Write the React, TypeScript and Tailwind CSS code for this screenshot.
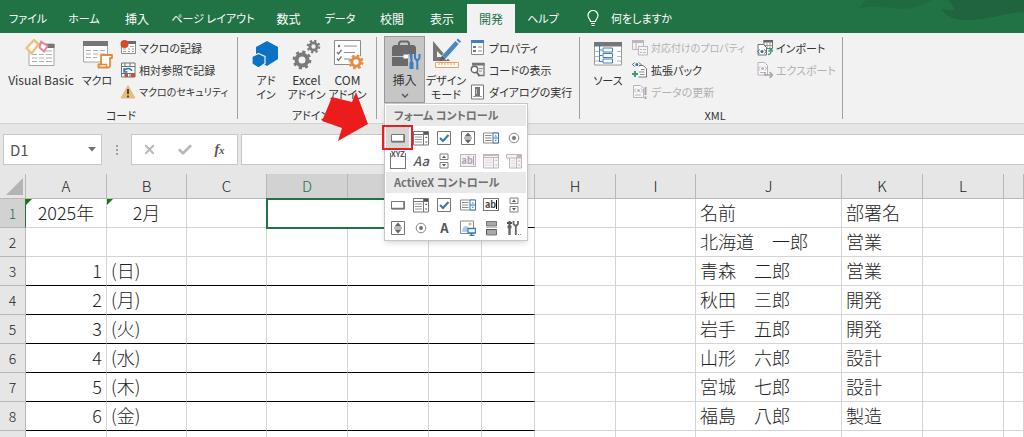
import { useState } from "react";
import type { ReactNode } from "react";
import clsx from "clsx";
import { Check, X } from "lucide-react";

/* ---------- Icon helpers ---------- */

type IconProps = { children: ReactNode };

const BigIcon = ({ children }: IconProps) => (
  <svg viewBox="0 0 32 32" className="size-8 shrink-0" fill="none" aria-hidden="true">
    {children}
  </svg>
);

const SmallIcon = ({ children }: IconProps) => (
  <svg viewBox="0 0 16 16" className="size-4 shrink-0" fill="none" aria-hidden="true">
    {children}
  </svg>
);

/* ---------- Large ribbon icons ---------- */

const VisualBasicIcon = () => (
  <BigIcon>
    <path d="M4 6h25v21.500H4z" fill="#fff" stroke="#a6a6a6" />
    <path d="M18 6h11.500v4H18z" fill="#767676" />
    <path d="M7 16.500h5m2 0h5m2 0h6M7 20h5m2 0h5m2 0h6M7 23.500h5m2 0h5m2 0h6M20 13h7" stroke="#b0b0b0" />
    <path d="M9 2l4.500 4.500L6.500 15.500 1.500 10z" fill="#fff" stroke="#e9c47c" strokeWidth="2.500" strokeLinejoin="round" />
    <path d="M16 3.500l6.500 4.500-3.500 5.500-4.500-4z" fill="#fff" stroke="#e9869c" strokeWidth="2" strokeLinejoin="round" />
  </BigIcon>
);

const MacroIcon = () => (
  <BigIcon>
    <path d="M2.500 3.500h24v20.500h-24z" fill="#fff" stroke="#a6a6a6" />
    <path d="M2 3h25v5H2z" fill="#767676" />
    <path d="M5 12.500h5m2 0h5m2 0h5M5 16h5m2 0h5m2 0h5M5 19.500h5m2 0h4" stroke="#b0b0b0" />
    <path
      d="M20 17h11v3h-2v8c0 1-1 1.500-2 1.500H17.500v-3H20z"
      fill="#fff"
      stroke="#e8893c"
      strokeWidth="1.800"
      strokeLinejoin="round"
    />
    <path d="M17.500 26.500h8v3" stroke="#e8893c" strokeWidth="1.500" />
  </BigIcon>
);

const AddInIcon = () => (
  <BigIcon>
    <path d="M17 3l11 6v12l-11 7-11-7V9z" fill="#0c72c6" />
    <path d="M8.500 15.500l6.500 3v7l-6.500 4.500-6.500-4v-7.500z" fill="#0c72c6" stroke="#f2f2f2" strokeWidth="1.200" />
  </BigIcon>
);

const ExcelAddInIcon = () => (
  <BigIcon>
    <circle cx="11" cy="22" r="5.500" stroke="#7a7a7a" strokeWidth="4" />
    <circle cx="11" cy="22" r="8.200" stroke="#7a7a7a" strokeWidth="2.400" strokeDasharray="3.200 3.240" />
    <circle cx="22.500" cy="8.500" r="3.600" stroke="#7a7a7a" strokeWidth="2.800" />
    <circle cx="22.500" cy="8.500" r="5.800" stroke="#7a7a7a" strokeWidth="2" strokeDasharray="2.300 2.250" />
  </BigIcon>
);

const ComAddInIcon = () => (
  <BigIcon>
    <path d="M2.500 2.500h26v24h-26z" fill="#fff" stroke="#8c8c8c" />
    <path d="M12 8h13M12 14.500h11M12 21h5" stroke="#8c8c8c" />
    <path d="M5 14l1.500 2 3-4M5 20.500l1.500 2 3-4" stroke="#767676" strokeWidth="1.300" />
    <circle cx="7" cy="8" r="1.200" fill="#767676" />
    <circle cx="24" cy="24" r="7.500" fill="#f2f2f2" />
    <circle cx="24" cy="24" r="4.200" stroke="#e28b43" strokeWidth="3" />
    <circle cx="24" cy="24" r="6.400" stroke="#e28b43" strokeWidth="2.200" strokeDasharray="2.600 2.430" />
  </BigIcon>
);

const ToolboxIcon = () => (
  <BigIcon>
    <path d="M10 7V5l1.500-1.500h7L20 5v2" stroke="#6a6a6a" strokeWidth="2" />
    <path d="M3 9l2-2h20l2 2v9H3z" fill="#6a6a6a" />
    <path d="M3 19h20v9H3z" fill="#6a6a6a" />
    <path d="M19 16h13v16H19z" fill="#c6c6c6" />
    <path d="M14.500 16.500h4.500v4h-4.500z" fill="#fff" />
    <path d="M20.500 16h3v7l1 2v6h-4v-6l1-2z" fill="#3c7fc0" />
    <path d="M26 16v4l1.500 2h1.500l1.500-2v-4M28.300 22v9.500" stroke="#3c7fc0" strokeWidth="2" />
  </BigIcon>
);

const DesignIcon = () => (
  <BigIcon>
    <path d="M3 3v20h17z" fill="#767676" />
    <path d="M7 13v6h6z" fill="#f2f2f2" />
    <path d="M29 3.500L14 20" stroke="#f2f2f2" strokeWidth="6.500" />
    <path d="M27 4.500L14 19" stroke="#4a86c5" strokeWidth="4.500" />
    <path d="M28 3.500l1.500-1.500" stroke="#4a86c5" strokeWidth="4.500" />
    <path d="M12 17.500l3.500 3-6 3z" fill="#5b5b5b" />
    <path d="M5.500 24.500h23v5h-23z" fill="#fff" stroke="#e8a25c" />
    <path d="M9 25v2m3-2v2m3-2v2m3-2v2m3-2v2m3-2v2" stroke="#e8a25c" />
  </BigIcon>
);

const SourceIcon = () => (
  <BigIcon>
    <path d="M2.500 4.500h27v22.500h-27z" fill="#fff" stroke="#9a9a9a" />
    <path d="M2 4h28v4.500H2z" fill="#767676" />
    <path d="M3 13.500h5m17 0h4M3 18.500h5m17 0h4M3 23h5m17 0h4" stroke="#b8b8b8" />
    <path d="M7.500 4v20M7.500 12h3m-3 5.500h3m-3 6h3" stroke="#3f7fbf" />
    <path d="M11 10h9.500v4H11zM11 15.500h9.500v4H11zM11 21h9.500v4H11z" fill="#fff" stroke="#3f7fbf" />
  </BigIcon>
);

/* ---------- Small ribbon icons ---------- */

const RecordIcon = () => (
  <SmallIcon>
    <path d="M1.500 1.500h14v12h-14z" fill="#fff" stroke="#8c8c8c" />
    <path d="M8 1h8v3H8z" fill="#6a6a6a" />
    <path d="M3 9h3m2 0h2m2 0h2M3 11.500h3m2 0h2m2 0h2M10 6.500h4" stroke="#a0a0a0" />
    <circle cx="4.500" cy="4" r="4" fill="#d8492a" />
  </SmallIcon>
);

const RelativeIcon = () => (
  <SmallIcon>
    <path d="M1.500 1h13.500v14H1.500zM1 4.500h14M1 11.500h14M5 1v3.500M10 1v3.500M5 11.500V15M10 11.500V15" fill="#fff" stroke="#707070" />
    <path d="M5 12h3v3H5zM11 12h4v3h-4z" fill="#d8492a" />
    <path d="M4 9.500c1-4 7-4 8-.5M4 6v4h3.500" stroke="#2f75b5" strokeWidth="1.400" />
  </SmallIcon>
);

const WarningIcon = () => (
  <SmallIcon>
    <path d="M8 1.500L15 14H1z" fill="#e8bd78" stroke="#e8bd78" strokeLinejoin="round" />
    <path d="M8 5v5m0 1.500v2" stroke="#3a3a3a" strokeWidth="1.800" />
  </SmallIcon>
);

const PropertiesIcon = () => (
  <SmallIcon>
    <path d="M1.500 1.500h12v13h-12z" fill="#fff" stroke="#8c8c8c" />
    <path d="M1 0h13v3H1z" fill="#3f7fbf" />
    <path d="M3 6h3v2H3zM3 10h3v2H3z" fill="#767676" />
    <path d="M8 7h4m-4 4h4" stroke="#8c8c8c" />
  </SmallIcon>
);

const ViewCodeIcon = () => (
  <SmallIcon>
    <path d="M2.500 1.500h11.500v12H8M2 1.500h12.500" stroke="#767676" strokeWidth="1.300" />
    <path d="M2 1h12.500v2.500H2z" fill="#767676" />
    <path d="M9 6.500h4M9 9h3" stroke="#8c8c8c" />
    <circle cx="4.500" cy="7.500" r="3.200" fill="#fff" stroke="#666" strokeWidth="1.400" />
    <path d="M6.500 10l3 4" stroke="#666" strokeWidth="1.800" />
  </SmallIcon>
);

const RunDialogIcon = () => (
  <SmallIcon>
    <path d="M1.500 1h12v14h-12z" fill="#fff" stroke="#767676" />
    <path d="M5 3h5v9H5z" fill="#767676" />
    <path d="M3 12.500h9" stroke="#9a9a9a" />
    <path d="M6.500 5v5" stroke="#c8c8c8" />
  </SmallIcon>
);

const MapPropertiesIcon = () => (
  <SmallIcon>
    <path d="M.5.500h11v9H.500z" fill="#f6f2f6" stroke="#bdb6bd" />
    <path d="M0 0h12v3H0zM6 6h10v2H6z" fill="#bdb6bd" />
    <path d="M6.500 6.500h9v8.500h-9z" fill="#f6f2f6" stroke="#bdb6bd" />
    <path d="M8 9.500h2m1 0h3M8 12.500h2m1 0h3M4 3v6" stroke="#bdb6bd" />
  </SmallIcon>
);

const ExpansionIcon = () => (
  <SmallIcon>
    <path d="M7 3.500h4l3.500 3V15H6.500" fill="#fff" stroke="#767676" />
    <path d="M9 7.500h3.500M7 10h5.500M8 12.500h4.500" stroke="#8c8c8c" />
    <path d="M2.500.500L.500 2.500l2 2M7 .500l2 2-2 2" stroke="#5a5a5a" />
    <circle cx="4.800" cy="2.500" r="1.500" fill="#2f75b5" />
    <path d="M3 9v6M0 12h6" stroke="#3f9c76" strokeWidth="2" />
  </SmallIcon>
);

const RefreshDataIcon = () => (
  <SmallIcon>
    <path d="M1.500 1.500h7l3 3v9h-10z" fill="#faf7fa" stroke="#b9b4b9" />
    <path d="M4 4.500L2.500 6.500 4 8.500M9 4.500l1.500 2L9 8.500M3 11h6" stroke="#b9b4b9" />
    <circle cx="6.500" cy="6.500" r="1.500" fill="#b9b4b9" />
    <path d="M13.500 3v8m0 1.500V15" stroke="#aaa5aa" strokeWidth="2" />
  </SmallIcon>
);

const ImportIcon = () => (
  <SmallIcon>
    <path d="M7 .500h8.500v8H7z" fill="#fff" stroke="#767676" />
    <path d="M6.500 0H16v2.500H6.500z" fill="#666" />
    <path d="M10 2v6M13 2v6M8 5.500h7" stroke="#9a9a9a" />
    <path d="M1 4.500h5.500l3 3V15H1z" fill="#fff" stroke="#707070" />
    <path d="M2.500 9.500L1 11.500l1.500 2M7.500 9.500l1.500 2-1.500 2" stroke="#5a5a5a" />
    <circle cx="5" cy="11.500" r="1.600" fill="#2f75b5" />
    <path d="M11 14.500c2.500 0 3-1 3-4M11.500 11.500L14 9l2 2.500" stroke="#3f9c76" strokeWidth="1.500" />
  </SmallIcon>
);

const ExportIcon = () => (
  <SmallIcon>
    <path d="M1 .500h6.500l3 3V13H1z" fill="#faf7fa" stroke="#b9b4b9" />
    <path d="M3 4.500l-1.500 2L3 8.500M8 4.500l1.500 2L8 8.500M3 10.500h5" stroke="#b9b4b9" />
    <circle cx="5.500" cy="6.500" r="1.500" fill="#b9b4b9" />
    <path d="M8 10v3h7M12.500 10l3 3-3 3" stroke="#a8a8a8" strokeWidth="1.600" />
  </SmallIcon>
);

/* ---------- Form control icons ---------- */

const PushButtonIcon = () => (
  <SmallIcon>
    <path d="M1.500 4.500h13v7.500h-13z" fill="#fff" stroke="#767676" />
    <path d="M2 11.500h12V5" stroke="#767676" strokeWidth="1.500" />
  </SmallIcon>
);

const ComboBoxIcon = () => (
  <SmallIcon>
    <path d="M.500 1.500h15v13.500H.500z" fill="#fff" stroke="#767676" />
    <path d="M.500 4.500h15M10.500 1.500V15" stroke="#767676" />
    <path d="M2 7h7M2 9.500h7M2 12h7" stroke="#9a9a9a" />
    <path d="M11 2h4v2h-4zM12 8l1.200-1.500L14.500 8zM12 11.500l1.200 1.500 1.300-1.500z" fill="#555" />
  </SmallIcon>
);

const CheckBoxIcon = () => (
  <SmallIcon>
    <path d="M1.500 1.500h13v13h-13z" fill="#fff" stroke="#767676" />
    <path d="M4 8l3 3 5.500-6" stroke="#3b78b8" strokeWidth="2.200" />
  </SmallIcon>
);

const SpinIcon = () => (
  <SmallIcon>
    <path d="M1.500 1.500h13v13h-13z" fill="#fff" stroke="#767676" />
    <path d="M4 8h8" stroke="#767676" />
    <path d="M8 2.500l3.500 4h-7zM8 13.500l3.500-4h-7z" fill="#666" />
  </SmallIcon>
);

const ListBoxIcon = () => (
  <SmallIcon>
    <path d="M.500 3h15v10H.500z" fill="#fff" stroke="#8c8c8c" />
    <path d="M2 5.500h6.500M2 8h6.500M2 10.500h6.500" stroke="#8c8c8c" />
    <path d="M10 3h5.500v10H10zM10 8h5.500" fill="#fff" stroke="#3b78b8" />
    <path d="M11.500 6.500l1.200-1.500L14 6.500zM11.500 9.800l1.200 1.500L14 9.800z" fill="#3b78b8" />
  </SmallIcon>
);

const RadioIcon = () => (
  <SmallIcon>
    <circle cx="8" cy="8" r="4.800" fill="#fff" stroke="#8a8a8a" />
    <circle cx="8" cy="8" r="2" fill="#777" />
  </SmallIcon>
);

const GroupBoxIcon = () => (
  <span className="relative block size-4 border border-t-0 border-[#767676]">
    <span className="absolute -top-1 left-0 text-[8px] leading-[10px] font-bold text-[#555]">XYZ</span>
  </span>
);

const LabelIcon = () => <span className="text-[13px] leading-4 font-medium text-[#555] italic">Aa</span>;

const ScrollBarIcon = () => (
  <SmallIcon>
    <path d="M4 1h8v5.500H4zM4 9.500h8V15H4z" fill="#fff" stroke="#808080" />
    <path d="M8 2.500l2 2.500H6zM8 13.500l2-2.500H6z" fill="#555" />
  </SmallIcon>
);

const TextFieldIcon = ({ muted }: { muted?: boolean }) => (
  <span
    className={clsx(
      "flex h-[13px] w-4 items-center justify-center border text-[9px] leading-none font-bold",
      muted ? "border-[#bdb6bd] bg-[#f4f0f4] text-[#a9a2a9]" : "border-[#767676] bg-white text-[#444]"
    )}
  >
    ab<span className={clsx("h-[9px] w-px", muted ? "bg-[#a9a2a9]" : "bg-black")} />
  </span>
);

const MutedComboIcon = () => (
  <SmallIcon>
    <path d="M.500 1.500h15v13.500H.500zM.500 4.500h15M10.500 4.500V15" fill="#f7f3f7" stroke="#bdb6bd" />
    <path d="M0 1h16v2H0zM12 8l1.200-1.500L14.500 8zM12 11.500l1.200 1.500 1.300-1.500z" fill="#bdb6bd" />
    <path d="M2 7h7M2 9.500h7M2 12h7" stroke="#ded8de" />
  </SmallIcon>
);

const MutedDropIcon = () => (
  <SmallIcon>
    <path d="M.500 1.500h15v3.500H.500zM3.500 5v10h12V5M10.500 5v10" fill="#f7f3f7" stroke="#bdb6bd" />
    <path d="M10.500 1.500h5V5h-5zM12 8.500L13.200 7l1.300 1.500zM12 11.500l1.200 1.500 1.300-1.500z" fill="#bdb6bd" />
    <path d="M5 8h4M5 10.500h4M5 13h4" stroke="#ded8de" />
  </SmallIcon>
);

const LetterIcon = () => <span className="text-[13px] leading-4 font-bold text-[#555]">A</span>;

const ImageControlIcon = () => (
  <SmallIcon>
    <path d="M.500 1h13v12.500H.500z" fill="#fff" stroke="#8c8c8c" />
    <path d="M2 12c0-4 2-6 4-6s3 2 3 6z" fill="#b5cde6" />
    <circle cx="10" cy="4" r="1.500" fill="#eab35e" />
    <path d="M8 8.500h7.500V13H8zM9.500 15.500h5M11.500 13v2.500" fill="#fff" stroke="#3b78b8" strokeWidth="1.300" />
  </SmallIcon>
);

const ToggleIcon = () => (
  <SmallIcon>
    <path d="M3.500 1.500h10V6h-10zM3.500 9.500h10V15h-10z" fill="#a8a8a8" stroke="#767676" />
    <path d="M3 7.500h11" stroke="#c0c0c0" />
    <path d="M3.500 14V9.500h9.500" stroke="#555" />
  </SmallIcon>
);

const MoreControlsIcon = () => (
  <SmallIcon>
    <path d="M1 3h5M3.500 1v5" stroke="#555" strokeWidth="2" />
    <path d="M3.500 5v10M1.500 7h4" stroke="#666" strokeWidth="2.400" />
    <path d="M7.500 1v3l2 2h.5l2-2V1M9.800 5v10" stroke="#666" strokeWidth="1.800" />
    <path d="M12 14.500h1m1 0h1" stroke="#888" />
  </SmallIcon>
);

/* ---------- Data ---------- */

const tabs = [
  { name: "ファイル", style: "w-14 text-[11px]" },
  { name: "ホーム", style: "w-14 text-[11px]" },
  { name: "挿入", style: "w-[50px]" },
  { name: "ページ レイアウト", style: "w-[102px] text-[11px]" },
  { name: "数式", style: "w-[49px]" },
  { name: "データ", style: "w-[54px] text-[11px]" },
  { name: "校閲", style: "w-[50px]" },
  { name: "表示", style: "w-[50px]" },
  { name: "開発", style: "w-12 bg-[#f2f2f2] text-[#217346]" },
  { name: "ヘルプ", style: "w-14 text-[11px]" },
];

const formControls = [
  { name: "ボタン", icon: <PushButtonIcon /> },
  { name: "コンボ ボックス", icon: <ComboBoxIcon /> },
  { name: "チェック ボックス", icon: <CheckBoxIcon /> },
  { name: "スピン ボタン", icon: <SpinIcon /> },
  { name: "リスト ボックス", icon: <ListBoxIcon /> },
  { name: "オプション ボタン", icon: <RadioIcon /> },
  { name: "グループ ボックス", icon: <GroupBoxIcon /> },
  { name: "ラベル", icon: <LabelIcon /> },
  { name: "スクロール バー", icon: <ScrollBarIcon /> },
  { name: "テキスト フィールド", icon: <TextFieldIcon muted />, disabled: true },
  { name: "コンボ ボックス - リスト編集", icon: <MutedComboIcon />, disabled: true },
  { name: "コンボ ボックス - ドロップダウン編集", icon: <MutedDropIcon />, disabled: true },
];

const activeXControls = [
  { name: "コマンド ボタン", icon: <PushButtonIcon /> },
  { name: "コンボ ボックス", icon: <ComboBoxIcon /> },
  { name: "チェック ボックス", icon: <CheckBoxIcon /> },
  { name: "リスト ボックス", icon: <ListBoxIcon /> },
  { name: "テキスト ボックス", icon: <TextFieldIcon /> },
  { name: "スクロール バー", icon: <ScrollBarIcon /> },
  { name: "スピン ボタン", icon: <SpinIcon /> },
  { name: "オプション ボタン", icon: <RadioIcon /> },
  { name: "ラベル", icon: <LetterIcon /> },
  { name: "イメージ", icon: <ImageControlIcon /> },
  { name: "トグル ボタン", icon: <ToggleIcon /> },
  { name: "コントロールの選択", icon: <MoreControlsIcon /> },
];

// columns without a label lie under the open menu or past the edge
const columns = [
  { id: "A", label: "A", width: "w-[81px]" },
  { id: "B", label: "B", width: "w-20" },
  { id: "C", label: "C", width: "w-20" },
  { id: "D", label: "D", width: "w-[81px]" },
  { id: "E", label: "", width: "w-[81px]" },
  { id: "F", label: "", width: "w-[53px]" },
  { id: "G", label: "", width: "w-[53px]" },
  { id: "H", label: "H", width: "w-[81px]" },
  { id: "I", label: "I", width: "w-20" },
  { id: "J", label: "J", width: "w-[146px]" },
  { id: "K", label: "K", width: "w-[81px]" },
  { id: "L", label: "L", width: "w-[81px]" },
  { id: "M", label: "", width: "w-auto" },
];

const selectedColumns = ["D", "E", "F"];
const scheduleColumns = ["A", "B", "C", "D", "E", "F", "G"];

const rows: Record<string, string>[] = [
  { no: "1", A: "2025年", B: "2月", J: "名前", K: "部署名" },
  { no: "2", J: "北海道　一郎", K: "営業" },
  { no: "3", A: "1", B: "(日)", J: "青森　二郎", K: "営業" },
  { no: "4", A: "2", B: "(月)", J: "秋田　三郎", K: "開発" },
  { no: "5", A: "3", B: "(火)", J: "岩手　五郎", K: "開発" },
  { no: "6", A: "4", B: "(水)", J: "山形　六郎", K: "設計" },
  { no: "7", A: "5", B: "(木)", J: "宮城　七郎", K: "設計" },
  { no: "8", A: "6", B: "(金)", J: "福島　八郎", K: "製造" },
  {},
];

/* ---------- Ribbon parts ---------- */

type BigButtonProps = {
  icon: ReactNode;
  title?: string;
  lines?: string[];
  className: string;
};

const BigButton = ({ icon, title, lines = [], className }: BigButtonProps) => (
  <button
    type="button"
    className={clsx("flex shrink-0 flex-col items-center pt-px leading-[14px] whitespace-nowrap", className)}
  >
    {icon}
    <span className="mt-[3px]">
      {title && <span className="block">{title}</span>}
      {lines.map((line) => (
        <span key={line} className="block text-[11px]">
          {line}
        </span>
      ))}
    </span>
  </button>
);

type SmallButtonProps = {
  icon: ReactNode;
  label: string;
  disabled?: boolean;
  compact?: boolean;
};

const SmallButton = ({ icon, label, disabled, compact }: SmallButtonProps) => (
  <button
    type="button"
    disabled={disabled}
    className={clsx(
      "flex h-[22px] items-center gap-[3px] whitespace-nowrap",
      compact ? "text-[10px]" : "text-[11px]",
      disabled && "text-[#b1b1b1]"
    )}
  >
    {icon}
    {label}
  </button>
);

type GroupProps = {
  label?: string;
  className: string;
  children: ReactNode;
};

const Group = ({ label, className, children }: GroupProps) => (
  <>
    <section aria-label={label} className={clsx("shrink-0 pt-1", className)}>
      <div className="flex h-[66px] items-start">{children}</div>
      {label && <p className="mt-1 text-center text-[11px] leading-4">{label}</p>}
    </section>
    <div className="mt-1 h-[82px] w-px shrink-0 bg-[#a0a0a0]" />
  </>
);

type ControlGridProps = {
  title: string;
  items: { name: string; icon: ReactNode; disabled?: boolean }[];
  highlightFirst?: boolean;
};

const ControlGrid = ({ title, items, highlightFirst }: ControlGridProps) => (
  <div>
    <p className="bg-[#e9e9e9] pl-2 text-[11px] leading-[21px] font-bold whitespace-nowrap text-[#707070]">{title}</p>
    <div className="grid grid-cols-6">
      {items.map((item, i) => {
        const active = highlightFirst && i === 0;
        return (
          <button
            key={item.name}
            type="button"
            aria-label={item.name}
            disabled={item.disabled}
            className={clsx("relative flex h-[23px] items-center justify-center", active && "bg-[#d8d6d3]")}
          >
            {item.icon}
            {active && <span className="absolute -inset-x-1 -inset-y-px z-10 border-2 border-[#ed1c24]" />}
          </button>
        );
      })}
    </div>
  </div>
);

const InsertMenu = () => {
  const [open, setOpen] = useState(true);

  return (
    <div className="relative -mt-px shrink-0">
      <button
        type="button"
        aria-expanded={open}
        onClick={() => setOpen(!open)}
        className="flex h-[67px] w-[41px] flex-col items-center border border-[#999] bg-[#c6c6c6] pt-px leading-[14px]"
      >
        <ToolboxIcon />
        <span className="mt-[3px]">挿入</span>
        <svg viewBox="0 0 8 5" className="mt-1.5 h-[5px] w-2" fill="none" aria-hidden="true">
          <path d="M1 1l3 3 3-3" stroke="#555" strokeWidth="1.400" />
        </svg>
      </button>
      {open && (
        <div className="absolute top-full left-0 z-20 w-36 border border-[#c6c6c6] bg-white p-px shadow-md">
          <ControlGrid title="フォーム コントロール" items={formControls} highlightFirst />
          <ControlGrid title="ActiveX コントロール" items={activeXControls} />
          {/* Pointer to the push button control */}
          <svg viewBox="0 0 48 52" className="absolute -top-3.5 -left-16 h-[52px] w-12" aria-hidden="true">
            <path d="M11 7l20 5 4-10 12 32-30 17 4-13-20-7z" fill="#ed1c1c" />
          </svg>
        </div>
      )}
    </div>
  );
};

/* ---------- Page ---------- */

const TabBar = () => (
  <header className="relative flex h-[33px] shrink-0 items-end bg-[#217346] text-white">
    <svg viewBox="0 0 170 33" className="absolute top-0 right-0 h-[33px] w-[170px]" aria-hidden="true">
      <path d="M5 9C7 4 10 2 12 0h66c-8 4-14 8-30 9C30 8 16 4 5 9z" fill="#1f6a41" />
      <path d="M94 0h76v12c-20 1-36 8-58 8-14 0-20-5-25-11 8 2 14 2 13-1-1-3-4-5-6-8z" fill="#20633f" />
    </svg>
    <nav className="flex">
      {tabs.map((tab) => (
        <button key={tab.name} type="button" className={clsx("h-[29px] shrink-0 whitespace-nowrap", tab.style)}>
          {tab.name}
        </button>
      ))}
    </nav>
    <button type="button" className="relative flex h-[29px] items-center gap-3 pl-4 text-[11px] whitespace-nowrap">
      <svg viewBox="0 0 12 17" className="h-[17px] w-3" fill="none" stroke="#fff" aria-hidden="true">
        <path d="M3.500 11.500C3.500 9 1 8.500 1 5.500a5 5 0 0 1 10 0c0 3-2.500 3.500-2.500 6zM4 13.500h4M4.500 15.500h3" strokeWidth="1.200" />
      </svg>
      何をしますか
    </button>
  </header>
);

const Ribbon = () => (
  <div className="flex h-[91px] shrink-0 border-b border-[#d2d2d2] bg-[#f2f2f2]">
    <Group label="コード" className="w-[237px] pl-[5px]">
      <BigButton icon={<VisualBasicIcon />} title="Visual Basic" className="w-[72px]" />
      <BigButton icon={<MacroIcon />} lines={["マクロ"]} className="w-10" />
      <div className="ml-[3px] shrink-0">
        <SmallButton icon={<RecordIcon />} label="マクロの記録" />
        <SmallButton icon={<RelativeIcon />} label="相対参照で記録" />
        <SmallButton icon={<WarningIcon />} label="マクロのセキュリティ" compact />
      </div>
    </Group>
    <Group label="アドイン" className="w-[138px] pl-2">
      <BigButton icon={<AddInIcon />} lines={["アド", "イン"]} className="w-10" />
      <BigButton icon={<ExcelAddInIcon />} title="Excel" lines={["アドイン"]} className="w-[41px]" />
      <BigButton icon={<ComAddInIcon />} title="COM" lines={["アドイン"]} className="w-[41px]" />
    </Group>
    <Group className="w-[202px] pl-[7px]">
      <InsertMenu />
      <BigButton icon={<DesignIcon />} lines={["デザイン", "モード"]} className="w-[42px]" />
      <div className="ml-[3px] shrink-0">
        <SmallButton icon={<PropertiesIcon />} label="プロパティ" />
        <SmallButton icon={<ViewCodeIcon />} label="コードの表示" />
        <SmallButton icon={<RunDialogIcon />} label="ダイアログの実行" />
      </div>
    </Group>
    <Group label="XML" className="w-[262px] pl-2">
      <BigButton icon={<SourceIcon />} lines={["ソース"]} className="w-10" />
      <div className="ml-1 w-[125px] shrink-0">
        <SmallButton icon={<MapPropertiesIcon />} label="対応付けのプロパティ" disabled compact />
        <SmallButton icon={<ExpansionIcon />} label="拡張パック" />
        <SmallButton icon={<RefreshDataIcon />} label="データの更新" disabled />
      </div>
      <div className="shrink-0">
        <SmallButton icon={<ImportIcon />} label="インポート" />
        <SmallButton icon={<ExportIcon />} label="エクスポート" disabled />
      </div>
    </Group>
  </div>
);

const FormulaBar = () => (
  <div className="flex h-[50px] shrink-0 items-start pt-2.5 pl-[3px] text-[#555]">
    <div className="flex h-[31px] w-[99px] items-center border border-[#c8c8c8] bg-white">
      <input
        aria-label="名前ボックス"
        defaultValue="D1"
        className="h-full w-0 flex-1 bg-transparent pl-1.5 text-[15px] outline-none"
      />
      <button type="button" aria-label="名前の一覧" className="px-[5px]">
        <svg viewBox="0 0 8 5" className="h-[5px] w-2" aria-hidden="true">
          <path d="M0 0h8L4 4.500z" fill="#707070" />
        </svg>
      </button>
    </div>
    <div className="flex h-[31px] w-[29px] flex-col items-center justify-center gap-0.5">
      <span className="size-0.5 bg-[#a0a0a0]" />
      <span className="size-0.5 bg-[#a0a0a0]" />
      <span className="size-0.5 bg-[#a0a0a0]" />
    </div>
    <div className="grid h-[31px] w-[107px] grid-cols-3 items-center justify-items-center border border-[#c8c8c8] bg-white">
      <button type="button" aria-label="キャンセル">
        <X className="size-[15px] text-[#b8b8b8]" strokeWidth={3} />
      </button>
      <button type="button" aria-label="入力">
        <Check className="size-4 text-[#b8b8b8]" strokeWidth={4} />
      </button>
      <button
        type="button"
        aria-label="関数の挿入"
        className="font-['Liberation_Serif',serif] text-sm leading-none font-bold text-[#555] italic"
      >
        f<span className="text-[11px]">x</span>
      </button>
    </div>
    <input
      aria-label="数式バー"
      className="ml-[3px] h-[31px] min-w-0 flex-1 border border-r-0 border-[#c8c8c8] bg-white px-2 text-[15px] outline-none"
    />
  </div>
);

const Sheet = () => (
  <table className="w-full table-fixed border-separate border-spacing-0 bg-white font-light text-[#222]">
    <thead>
      <tr className="h-[25px] bg-[#e6e6e6]">
        <th className="w-[26px] border-r border-b border-[#b8b8b8] p-0">
          <svg viewBox="0 0 17 17" className="ml-1.5 h-[17px] w-[17px]" aria-hidden="true">
            <path d="M17 0v17H0z" fill="#b4b4b4" />
          </svg>
        </th>
        {columns.map((col) => (
          <th
            key={col.id}
            className={clsx(
              "border-r border-b border-[#b8b8b8] p-0 text-[15px] leading-6 font-light",
              col.width,
              selectedColumns.includes(col.id) && "bg-[#d2d2d2] text-[#217346]"
            )}
          >
            {col.label}
          </th>
        ))}
      </tr>
    </thead>
    <tbody className="text-lg leading-[26px]">
      {rows.map((row, i) => (
        <tr key={i} className="h-[29px]">
          <th
            className={clsx(
              "border-r border-b p-0 text-sm leading-7 font-light",
              i === 0 ? "border-r-[#217346] border-b-[#b8b8b8] bg-[#d2d2d2] text-[#217346]" : "border-[#b8b8b8] bg-[#e6e6e6]"
            )}
          >
            {row.no}
          </th>
          {columns.map((col) => {
            // D1:F1 is one merged cell
            if (i === 0 && (col.id === "E" || col.id === "F")) return null;
            const selected = i === 0 && col.id === "D";
            const ruled = (i > 1 && scheduleColumns.includes(col.id)) || (i === 0 && col.id === "G");
            const flagged = i === 0 && (col.id === "A" || col.id === "B");
            return (
              <td
                key={col.id}
                colSpan={selected ? 3 : 1}
                className={clsx(
                  "border-r border-b border-r-[#d4d4d4] p-0 align-top whitespace-nowrap",
                  ruled ? "border-b-black" : "border-b-[#d4d4d4]",
                  flagged && "relative text-center",
                  col.id === "A" && i > 0 && "pr-1 text-right",
                  col.id === "B" && i > 0 && "pl-1",
                  (col.id === "J" || col.id === "K") && "pl-1",
                  selected && "outline-2 -outline-offset-1 outline-[#217346]"
                )}
              >
                {flagged && (
                  <svg viewBox="0 0 6 6" className="absolute top-0 left-0 size-1.5" aria-hidden="true">
                    <path d="M0 0h6L0 6z" fill="#107c10" />
                  </svg>
                )}
                {row[col.id]}
              </td>
            );
          })}
        </tr>
      ))}
    </tbody>
  </table>
);

const App = () => {
  return (
    <div className="flex h-screen flex-col overflow-hidden bg-[#e6e6e6] font-['Noto_Sans_CJK_JP',sans-serif] text-xs text-[#333] [font-feature-settings:'palt']">
      <TabBar />
      <Ribbon />
      <FormulaBar />
      <main className="min-h-0 flex-1 overflow-hidden">
        <Sheet />
      </main>
    </div>
  );
};

export default App;
